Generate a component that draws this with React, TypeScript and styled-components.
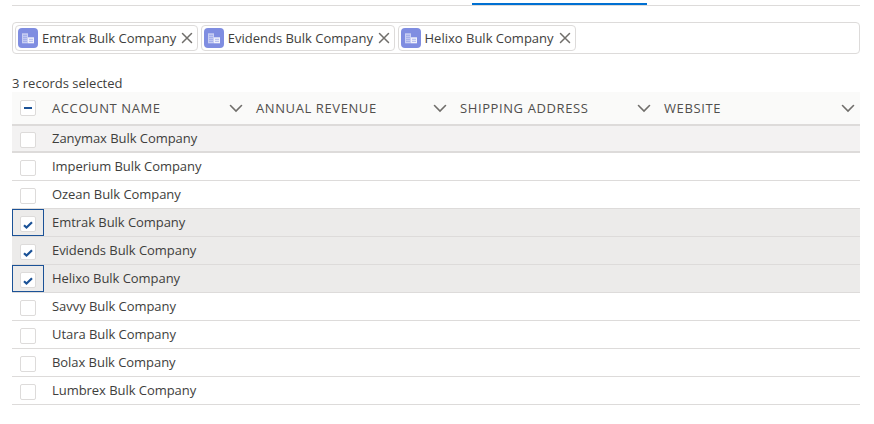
import React from "react";
import styled, { createGlobalStyle } from "styled-components";

const Global = createGlobalStyle`
  html, body { margin: 0; padding: 0; background: #fff; }
  body { font-family: "Open Sans", "Noto Sans", sans-serif; color: #3e3e3c; }
`;

const Page = styled.div`
  width: 874px;
  height: 424px;
  padding: 3px 14px 0 12px;
  box-sizing: border-box;
  overflow: hidden;
`;

const TabBar = styled.div`
  height: 2px;
  border-bottom: 1px solid #dddbda;
  display: flex;
  padding-left: 460px;
`;

const ActiveTab = styled.div`
  width: 175px;
  height: 2px;
  background: #0070d2;
`;

const PillBox = styled.div`
  margin-top: 16px;
  height: 32px;
  box-sizing: border-box;
  border: 1px solid #dddbda;
  border-radius: 4px;
  display: flex;
  align-items: center;
  gap: 2.5px;
  padding: 0 2px;
`;

const Pill = styled.div`
  height: 26px;
  box-sizing: border-box;
  border: 1px solid #dddbda;
  border-radius: 4px;
  display: flex;
  align-items: center;
  padding: 0 4px 0 2px;
  font-size: 13px;
  color: #3e3e3c;
`;

const ObjIcon = styled.span`
  width: 20px;
  height: 20px;
  border-radius: 4px;
  background: #7f8de1;
  display: flex;
  align-items: center;
  justify-content: center;
  margin-right: 4px;
`;

const Remove = styled.span`
  width: 12px;
  height: 12px;
  margin-left: 5px;
  display: flex;
  align-items: center;
  justify-content: center;
`;

const Count = styled.div`
  margin-top: 20px;
  height: 18px;
  line-height: 18px;
  font-size: 13px;
  color: #3e3e3c;
`;

const HeaderRow = styled.div`
  height: 34px;
  box-sizing: border-box;
  background: #fafaf9;
  border-bottom: 2px solid #dddbda;
  display: flex;
  align-items: center;
`;

const CheckCell = styled.div<{ $focused?: boolean; $pad?: number }>`
  width: 32px;
  height: 100%;
  box-sizing: border-box;
  flex: none;
  display: flex;
  align-items: flex-start;
  justify-content: center;
  padding-top: ${(p) => p.$pad ?? 6}px;
  border: 1px solid ${(p) => (p.$focused ? "#1b5297" : "transparent")};
`;

const Box = styled.span`
  width: 16px;
  height: 16px;
  box-sizing: border-box;
  background: #fff;
  border: 1px solid #dddbda;
  border-radius: 2px;
  display: flex;
  align-items: center;
  justify-content: center;
`;

const Dash = styled.span`
  width: 8px;
  height: 2px;
  background: #1b5297;
`;

const HeaderCell = styled.div`
  width: 204px;
  height: 100%;
  box-sizing: border-box;
  flex: none;
  padding: 0 5px 0 8px;
  display: flex;
  align-items: center;
  justify-content: space-between;
  font-size: 13px;
  letter-spacing: 0.6px;
  color: #514f4d;
`;

const Row = styled.div<{ $selected?: boolean }>`
  height: 28px;
  box-sizing: border-box;
  display: flex;
  align-items: center;
  background: ${(p) => (p.$selected ? "#ecebea" : "#fff")};
  border-bottom: 1px solid #dddbda;
`;

const FirstRow = styled(Row)`
  height: 27px;
  background: #f3f2f2;
  border-bottom: 2px solid #dddbda;
`;

const NameCell = styled.div`
  padding: 0 0 2px 8px;
  font-size: 13px;
  letter-spacing: -0.05px;
  color: #3e3e3c;
`;

const Building = () => (
  <svg width="14" height="14" viewBox="0 0 14 14">
    <rect x="1" y="2.300" width="6" height="10" fill="#c9cff3" />
    <rect x="7" y="6.300" width="6" height="6" fill="#f0f1fb" />
    <path d="M2 4.300h4M2 6.300h4M2 8.300h4M2 10.300h4M8 8.300h4M8 10.300h4" stroke="#7f8de1" strokeWidth="0.6" />
  </svg>
);

const Cross = () => (
  <svg width="12" height="12" viewBox="0 0 12 12">
    <path d="M1.500 1.500l9 9M10.500 1.500l-9 9" stroke="#706e6b" strokeWidth="1.500" strokeLinecap="round" />
  </svg>
);

const Chevron = () => (
  <svg width="14" height="14" viewBox="0 0 14 14">
    <path d="M1.500 4.500L7 10l5.500-5.500" fill="none" stroke="#706e6b" strokeWidth="1.600" strokeLinecap="round" />
  </svg>
);

const Tick = () => (
  <svg width="10" height="10" viewBox="0 0 10 10" overflow="visible">
    <path d="M1 6.300L3.500 8.600L9 3.300" fill="none" stroke="#1b5297" strokeWidth="2.200" />
  </svg>
);

const pills = ["Emtrak Bulk Company", "Evidends Bulk Company", "Helixo Bulk Company"];
const columns = ["ACCOUNT NAME", "ANNUAL REVENUE", "SHIPPING ADDRESS", "WEBSITE"];
const rows = [
  { name: "Imperium Bulk Company" },
  { name: "Ozean Bulk Company" },
  { name: "Emtrak Bulk Company", selected: true, focused: true },
  { name: "Evidends Bulk Company", selected: true },
  { name: "Helixo Bulk Company", selected: true, focused: true },
  { name: "Savvy Bulk Company" },
  { name: "Utara Bulk Company" },
  { name: "Bolax Bulk Company" },
  { name: "Lumbrex Bulk Company" },
];

export default function App() {
  return (
    <Page>
      <Global />
      <TabBar>
        <ActiveTab />
      </TabBar>
      <PillBox>
        {pills.map((p) => (
          <Pill key={p}>
            <ObjIcon>
              <Building />
            </ObjIcon>
            {p}
            <Remove>
              <Cross />
            </Remove>
          </Pill>
        ))}
      </PillBox>
      <Count>3 records selected</Count>
      <HeaderRow>
        <CheckCell $pad={7}>
          <Box>
            <Dash />
          </Box>
        </CheckCell>
        {columns.map((c) => (
          <HeaderCell key={c}>
            {c}
            <Chevron />
          </HeaderCell>
        ))}
      </HeaderRow>
      <FirstRow>
        <CheckCell $pad={5}>
          <Box />
        </CheckCell>
        <NameCell>Zanymax Bulk Company</NameCell>
      </FirstRow>
      {rows.map((r) => (
        <Row key={r.name} $selected={r.selected}>
          <CheckCell $focused={r.focused}>
            <Box>{r.selected && <Tick />}</Box>
          </CheckCell>
          <NameCell>{r.name}</NameCell>
        </Row>
      ))}
    </Page>
  );
}
